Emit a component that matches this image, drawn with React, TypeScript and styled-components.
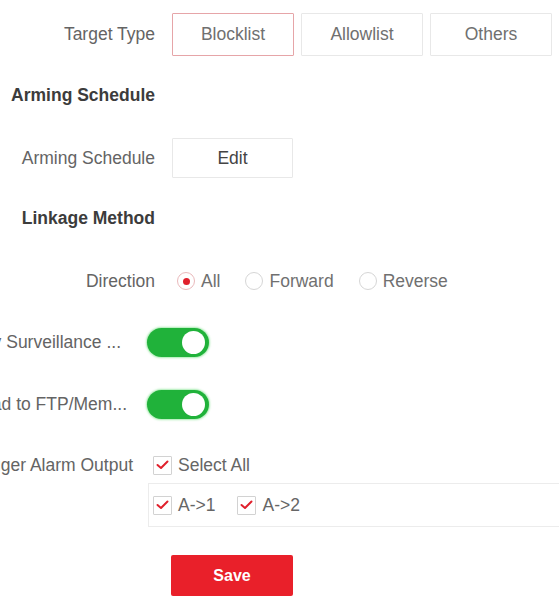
import styled, { createGlobalStyle } from "styled-components";

const GlobalStyle = createGlobalStyle`
  html, body {
    margin: 0;
    padding: 0;
    background: #ffffff;
    overflow: hidden;
  }
  body {
    font-family: "Liberation Sans", Arial, sans-serif;
    color: #666666;
  }
`;

const Page = styled.div`
  display: flex;
  flex-direction: column;
  width: 559px;
  height: 603px;
  padding-top: 13px;
  box-sizing: border-box;
`;

const Row = styled.div<{ $height: number; $top: number }>`
  display: flex;
  align-items: center;
  height: ${(p) => p.$height}px;
  margin-top: ${(p) => p.$top}px;
  flex-shrink: 0;
`;

const Label = styled.div<{ $width: number; $gap: number }>`
  display: flex;
  justify-content: flex-end;
  width: ${(p) => p.$width}px;
  margin-right: ${(p) => p.$gap}px;
  flex-shrink: 0;
  white-space: nowrap;
  font-size: 17.5px;
  color: #646464;
`;

const Heading = styled(Label)`
  font-weight: 700;
  color: #3c3c3c;
`;

const Segmented = styled.div`
  display: flex;
  gap: 7px;
  height: 100%;
`;

const OptionButton = styled.button<{ $active?: boolean; $width?: number }>`
  width: ${(p) => p.$width ?? 122}px;
  height: 100%;
  border: 1.5px solid ${(p) => (p.$active ? "#e6a5a8" : "#e8e8e8")};
  background: #ffffff;
  font-family: inherit;
  font-size: 17.5px;
  color: #707070;
  padding: 0;
  border-radius: 1px;
  cursor: pointer;
`;

const EditButton = styled(OptionButton)`
  color: #444444;
`;

const RadioGroup = styled.div`
  display: flex;
  align-items: center;
  gap: 25px;
  padding-left: 5px;
`;

const RadioItem = styled.label`
  display: flex;
  align-items: center;
  gap: 6px;
  font-size: 17.5px;
  color: #707070;
`;

const RadioDot = styled.span<{ $checked?: boolean }>`
  position: relative;
  width: 18px;
  height: 18px;
  box-sizing: border-box;
  border-radius: 50%;
  border: 1.5px solid ${(p) => (p.$checked ? "#eab9bb" : "#d6d6d6")};
  &::after {
    content: "";
    position: absolute;
    left: 50%;
    top: 50%;
    width: 7px;
    height: 7px;
    margin: -3.5px 0 0 -3.5px;
    border-radius: 50%;
    background: #e0202c;
    display: ${(p) => (p.$checked ? "block" : "none")};
  }
`;

const Switch = styled.span<{ $on?: boolean }>`
  position: relative;
  display: block;
  width: 62px;
  height: 29px;
  border-radius: 15px;
  background: ${(p) => (p.$on ? "#20b23a" : "#cccccc")};
  box-shadow: 0 0 2px 1px rgba(60, 210, 80, 0.45);
  &::after {
    content: "";
    position: absolute;
    top: 3px;
    right: ${(p) => (p.$on ? "4px" : "auto")};
    left: ${(p) => (p.$on ? "auto" : "4px")};
    width: 23px;
    height: 23px;
    border-radius: 50%;
    background: #ffffff;
  }
`;

const CheckItem = styled.label`
  display: flex;
  align-items: center;
  gap: 6px;
  font-size: 17.5px;
  color: #666666;
`;

const CheckBox = styled.span`
  display: flex;
  align-items: center;
  justify-content: center;
  width: 19px;
  height: 19px;
  box-sizing: border-box;
  border: 1.5px solid #d2d2d2;
  border-radius: 1px;
  background: #ffffff;
`;

const OutputBox = styled.div`
  display: flex;
  align-items: center;
  gap: 22px;
  height: 100%;
  flex: 1;
  margin-left: 148px;
  padding-left: 4px;
  border: 1.5px solid #ececec;
  border-right: none;
  box-sizing: border-box;
`;

const SaveButton = styled.button`
  margin-left: 171px;
  width: 122px;
  height: 100%;
  border: none;
  border-radius: 2px;
  background: #e9202a;
  color: #ffffff;
  font-family: inherit;
  font-weight: 700;
  font-size: 16px;
  cursor: pointer;
`;

const Check = () => (
  <CheckBox>
    <svg width="13" height="10" viewBox="0 0 13 10">
      <polyline
        points="1.5,5 5,8 11.5,1.5"
        fill="none"
        stroke="#e0202c"
        strokeWidth="2"
        strokeLinecap="round"
        strokeLinejoin="round"
      />
    </svg>
  </CheckBox>
);

export default function App() {
  return (
    <>
      <GlobalStyle />
      <Page>
        <Row $height={43} $top={0}>
          <Label $width={155} $gap={17}>Target Type</Label>
          <Segmented>
            <OptionButton $active>Blocklist</OptionButton>
            <OptionButton>Allowlist</OptionButton>
            <OptionButton>Others</OptionButton>
          </Segmented>
        </Row>

        <Row $height={24} $top={27}>
          <Heading $width={155} $gap={0}>Arming Schedule</Heading>
        </Row>

        <Row $height={40} $top={31}>
          <Label $width={155} $gap={17}>Arming Schedule</Label>
          <EditButton $width={121}>Edit</EditButton>
        </Row>

        <Row $height={24} $top={28}>
          <Heading $width={155} $gap={0}>Linkage Method</Heading>
        </Row>

        <Row $height={30} $top={36}>
          <Label $width={155} $gap={17}>Direction</Label>
          <RadioGroup>
            <RadioItem>
              <RadioDot $checked />
              All
            </RadioItem>
            <RadioItem>
              <RadioDot />
              Forward
            </RadioItem>
            <RadioItem>
              <RadioDot />
              Reverse
            </RadioItem>
          </RadioGroup>
        </Row>

        <Row $height={29} $top={32}>
          <Label $width={121} $gap={26}>Notify Surveillance ...</Label>
          <Switch $on />
        </Row>

        <Row $height={29} $top={33}>
          <Label $width={127} $gap={20}>Upload to FTP/Mem...</Label>
          <Switch $on />
        </Row>

        <Row $height={24} $top={34}>
          <Label $width={133} $gap={20}>Trigger Alarm Output</Label>
          <CheckItem>
            <Check />
            Select All
          </CheckItem>
        </Row>

        <Row $height={44} $top={6}>
          <OutputBox>
            <CheckItem>
              <Check />
              A-&gt;1
            </CheckItem>
            <CheckItem>
              <Check />
              A-&gt;2
            </CheckItem>
          </OutputBox>
        </Row>

        <Row $height={41} $top={28}>
          <SaveButton>Save</SaveButton>
        </Row>
      </Page>
    </>
  );
}
